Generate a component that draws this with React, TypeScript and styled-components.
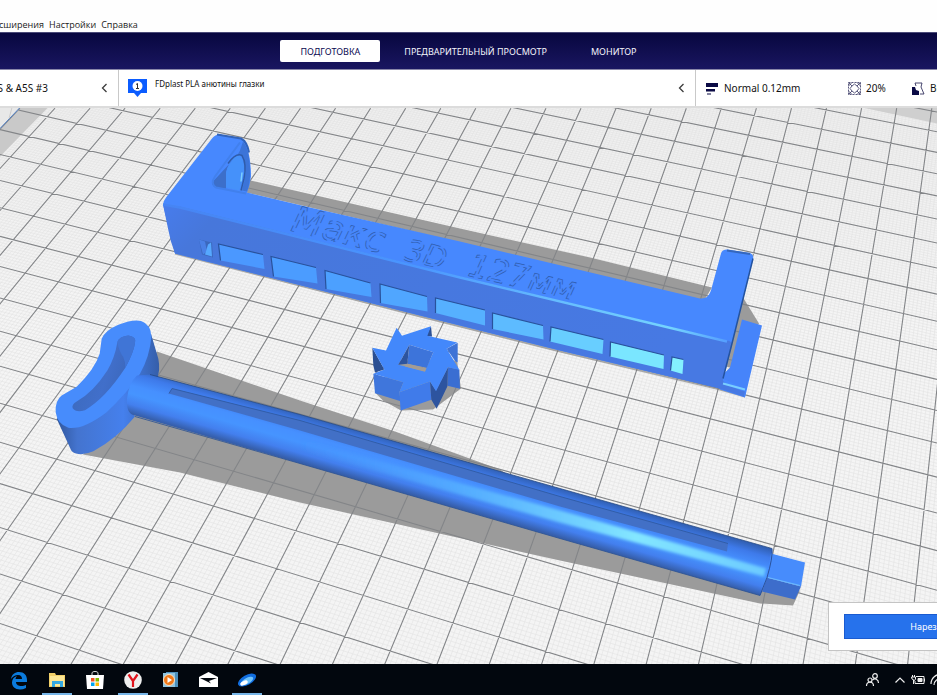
import React from "react";
import styled, { createGlobalStyle } from "styled-components";

const GlobalStyle = createGlobalStyle`
  html, body { margin: 0; height: 100%; overflow: hidden; }
  #root { height: 100%; }
  * { box-sizing: border-box; }
  button { font: inherit; border: 0; margin: 0; padding: 0; background: none; cursor: pointer; }
`;

const Desktop = styled.div`
  display: flex;
  flex-direction: column;
  height: 100vh;
  overflow: hidden;
  background: #fff;
  font-family: "Noto Sans", "Open Sans", sans-serif;
  font-size: 10px;
  color: #14142b;
`;

const MenuBar = styled.nav`
  display: flex;
  align-items: flex-end;
  gap: 5px;
  height: 32px;
  flex: none;
  background: #fefefe;
`;

const MenuItem = styled.button<{ $clipped?: boolean }>`
  display: flex;
  justify-content: flex-end;
  width: ${(p) => (p.$clipped ? "44px" : "auto")};
  overflow: hidden;
  white-space: nowrap;
  font-family: "Open Sans", sans-serif;
  font-size: 9px;
  line-height: 14px;
  color: #222;
`;

const StageBar = styled.header`
  display: flex;
  justify-content: center;
  align-items: center;
  gap: 4px;
  height: 37px;
  flex: none;
  border-top: 1px solid #4a4a78;
  background: linear-gradient(#08073f, #191660);
`;

const StageTab = styled.button<{ $active?: boolean }>`
  height: 22px;
  padding: 0 20px;
  border-radius: 2px;
  background: ${(p) => (p.$active ? "#fff" : "transparent")};
  color: ${(p) => (p.$active ? "#0a0850" : "#f4f4fb")};
  font-size: 9px;
  white-space: nowrap;
`;

const ConfigBar = styled.section`
  display: grid;
  grid-template-columns: 119px 1fr 241px;
  height: 39px;
  flex: none;
  overflow: hidden;
  border-top: 1px solid #8987a8;
  border-bottom: 2px solid #dcdcdc;
  background: #fff;
`;

const ConfigCell = styled.button<{ $divided?: boolean }>`
  display: flex;
  align-items: center;
  overflow: hidden;
  white-space: nowrap;
  text-align: left;
  color: #111;
  border-right: ${(p) => (p.$divided ? "1px solid #c9c9c9" : "0")};
`;

const PrinterName = styled.span`
  display: flex;
  justify-content: flex-end;
  width: 48px;
  overflow: hidden;
`;

const CellArrow = styled.svg`
  width: 8px;
  height: 12px;
  margin-left: auto;
  margin-right: 10px;
`;

const MaterialName = styled.span`
  align-self: flex-start;
  margin: 8px 0 0 8px;
  font-size: 8px;
  line-height: 12px;
`;

const ExtruderIcon = styled.svg`
  width: 20px;
  height: 20px;
  margin-left: 8px;
  flex: none;
`;

const Setting = styled.span<{ $width: number }>`
  display: flex;
  align-items: center;
  gap: 5px;
  flex: none;
  width: ${(p) => p.$width}px;
`;

const SettingsCell = styled(ConfigCell)`
  padding-left: 10px;
`;

const Viewport = styled.main`
  position: relative;
  flex: 1;
  min-height: 0;
  overflow: hidden;
  background: #f1f1f1;
`;

const Scene = styled.svg`
  display: block;
  width: 100%;
  height: 100%;
`;

const ActionPanel = styled.div`
  position: absolute;
  right: -96px;
  bottom: 13px;
  padding: 11px 15px;
  border: 1px solid #c4c4c4;
  background: #fff;
`;

const SliceButton = styled.button`
  display: block;
  width: 173px;
  height: 25px;
  border: 1px solid #1a5bd0;
  background: #2672ec;
  color: #fff;
  font-size: 9px;
`;

const Taskbar = styled.footer`
  display: flex;
  justify-content: space-between;
  height: 31px;
  flex: none;
  background: #02070e;
`;

const TaskGroup = styled.div`
  display: flex;
`;

const TaskButton = styled.button<{ $running?: boolean }>`
  display: grid;
  place-items: center;
  width: 38px;
  height: 31px;
  padding: 0 4px;
  svg { display: block; width: 20px; height: 20px; }
  background: ${(p) =>
    p.$running ? "linear-gradient(#76b5e8, #76b5e8) center bottom / 30px 2px no-repeat" : "none"};
`;

const Tray = styled.div`
  display: flex;
  align-items: center;
  gap: 3px;
  width: 72px;
  overflow: hidden;
`;

const TrayButton = styled.button<{ $wide?: boolean }>`
  flex: none;
  width: ${(p) => (p.$wide ? "24px" : "16px")};
  height: 16px;
  svg { display: block; width: 16px; height: 16px; }
`;

const VIEW = { left: 0, top: 107, width: 937, height: 557 };

function lengthwiseY(k: number) {
  return 49630 / (45.155 - k) - 970;
}

function gridPath(step: number, skipMajor: boolean) {
  const parts: string[] = [];
  for (let i = -190; i <= 150; i += step) {
    if (skipMajor && i % 10 === 0) continue;
    const y = lengthwiseY(i / 10);
    const end = y + ((y + 1012) / 4858) * 937;
    if (end > 100) parts.push(`M0 ${y.toFixed(1)}L937 ${end.toFixed(1)}`);
  }
  for (let i = -10; i <= 390; i += step) {
    if (skipMajor && i % 10 === 0) continue;
    const n = i / 10;
    parts.push(`M${(55 + 35.07 * n).toFixed(1)} 107.7L${(52.3 * n - 452.2).toFixed(1)} 664`);
  }
  return parts.join("");
}

const MINOR_GRID = gridPath(1, true);
const MAJOR_GRID = gridPath(10, false);

const WINDOWS: [string, string][] = [
  ["218.5,243.5 263,254 264.5,268.5 220.5,260", "#4b98ff"],
  ["271,256 316,267 317.5,283 273.5,276", "#4b9cff"],
  ["325,270 370.5,282.5 371.5,296.5 326,288.5", "#4ca0ff"],
  ["380,283.5 427,296 427.5,311 380.5,302.5", "#50a6ff"],
  ["435.5,297.5 485,309.5 485,325 435.5,312.5", "#56b0ff"],
  ["492.5,312.5 543,325 543.5,339 492.5,328.5", "#5dbbff"],
  ["551,326.5 603.5,339 602.5,353.5 550,341", "#68ceff"],
  ["610.5,341.5 664,354.5 663.5,368.5 610,356", "#7ae6ff"],
  ["672,356.5 683.5,359 682.5,373.5 670.5,370", "#84f0ff"],
];

function Shadows() {
  return (
    <g fill="#9b9b9b">
      <path d="M246 179L460 228L590 257L712 287L704 300L460 242L246 192z" />
      <path d="M743 297L759 323L733 368L726 366z" />
      <path d="M157 351L300 400L395 431L500 469L560 510L760 590L800 590L793 605L760 603L560 560L300 502L180 472L83 454z" />
      <path d="M375 392L383 400L401 410L433 409L461 388L457 360L397 360z" />
    </g>
  );
}

function Bracket() {
  return (
    <g>
      <path d="M175 254L420 317L560 352L716 389L745 397L745 393L175 249z" fill="#777" opacity=".6" />
      <path d="M742 319L762 325L745 397L720 389L723 374L730 367z" fill="#4684fa" />
      <path d="M163 204Q163 201 166 197L212 138Q215 134 220 134L240 138Q246 140 248 150Q251 162 251 176Q250 185 247 192L310 207L460 241L700 298Q708 299 711 290L721 253Q722 249 727 249L750 252.500Q754 254 753 259L732 343L723 378L746 389L745 396L716 387L560 350L420 315L175 253Z" fill="#4788fe" />
      <path d="M163 204L180 206L460 276L727 340Q733 341 732 345L723 379Q722 384 745 391L744 396L716 387L560 350L420 315L175 253Q170 240 168 228Z" fill="url(#front)" />
      <path d="M163 204L180 207L460 277L727 341" fill="none" stroke="url(#ridge)" strokeWidth="2.500" />
      <path d="M723 383L745 389" fill="none" stroke="#79ceff" strokeWidth="2" />
      <path d="M753 258L732 343L723 378" fill="none" stroke="#24539f" strokeWidth="1.500" />
      <path d="M217 134L241 138Q247 141 249 152" fill="none" stroke="#3264bb" strokeWidth="2" />
      <path d="M243 141Q249 148 250 166Q251 181 247 191L242 190Q248 170 244 157Q241 151 236 157L240 150z" fill="#3c74d8" />
      <path d="M213 181Q211 184 215 187Q220 188 226 188L226 172Q228 162 236 156L238 154z" fill="#3c6fca" />
      <path d="M237 154Q243 155 244 166Q244 178 239 190L226 187L226 172Q229 162 237 154z" fill="#4591fa" />
      <path d="M228 163Q236 152 242 155Q247 163 244 178L241 190" fill="none" stroke="#2f5ca9" strokeWidth="1.500" />
      <path d="M242 172L241 181" stroke="#7ccfff" strokeWidth="1.500" />
      <path d="M240 142L215 176Q210 183 216 187L246 193" fill="none" stroke="#4180ed" strokeWidth="2" />
      <path d="M727 250L750 253.500" stroke="#3567bd" strokeWidth="2" />
      <path d="M199 239L212 242L213 257L202 254z" fill="#3b68bd" />
      <path d="M199 239L205 241L207 251L203 254z" fill="#4a80e6" />
      <path d="M208 244L211 242L212 256L205 254z" fill="#56a8ff" />
      {WINDOWS.map(([points, fill]) => {
        const corners = points.split(" ");
        return (
          <g key={points}>
            <polygon points={points} fill={fill} />
            <polyline
              points={`${corners[3]} ${corners[0]} ${corners[1]}`}
              fill="none"
              stroke="#29529c"
              strokeWidth="1.200"
            />
          </g>
        );
      })}
      <g
        fill="#4786fa"
        stroke="#2f5dae"
        strokeWidth=".7"
        strokeDasharray="9 4"
        fontFamily="DejaVu Sans"
        fontStyle="italic"
      >
        <text fontSize="36" transform="translate(290 230) rotate(14)">Макс</text>
        <text fontSize="30" transform="translate(403 259) rotate(14)">3D</text>
        <text fontSize="32" transform="translate(467 275) rotate(13)">127мм</text>
      </g>
    </g>
  );
}

function Gear() {
  return (
    <g transform="translate(350 310) scale(.33333)">
      <path d="M70 190L160 215L148 245L152 272L75 248z" fill="#3f76dc" />
      <path d="M67 112L103 177L75 186L70 165z" fill="#2b4f92" />
      <path d="M290 115L323 97L323 156L316 152z" fill="#3e73d6" />
      <path d="M294 170L328 177L330 235L292 226z" fill="#3a6ed2" />
      <path d="M148 245L240 213L244 268L152 300z" fill="#407bea" />
      <path d="M240 213L258 240L294 170L292 228L260 295L244 268z" fill="#2d549f" />
      <path d="M243 47L246 78L226 78z" fill="#2c5196" />
      <path
        fillRule="evenodd"
        d="M67 112L108 120L140 52L156 76L243 47L232 76L322 96L290 115L328 178L294 170L258 242L240 213L148 245L160 215L70 190L103 177zM178 103L250 125L225 182L145 163z"
        fill="#4388fb"
      />
      <path d="M178 103L250 125L230 172L172 160z" fill="#3d74da" />
      <path d="M178 103L172 160L145 163z" fill="#2d549e" />
      <path d="M172 160L229 173L225 184L165 168z" fill="#a49c94" />
    </g>
  );
}

function Roller() {
  return (
    <g>
      <g transform="translate(40 310) scale(.33333)">
        <path d="M333 70L355 145Q362 180 350 207L262 285L285 318Q230 385 160 422Q130 435 108 429Q94 426 90 412L50 325L150 260z" fill="url(#handleSide)" />
        <path
          fillRule="evenodd"
          d="M185 85Q195 60 235 43Q280 25 305 32Q334 42 334 80Q330 135 300 190Q260 250 200 305Q130 358 85 352Q52 340 47 305Q45 270 65 255L110 229Q165 175 179 130z"
          fill="#478cfc"
        />
        <path d="M232 95Q238 77 265 75Q291 79 285 98Q281 125 256 172Q195 265 135 299Q108 307 98 293Q94 282 110 273Q160 245 202 180Q225 140 232 95z" fill="url(#handleSlot)" />
        <path d="M232 95Q236 120 250 140Q257 155 256 172Q281 125 285 98Q291 79 265 75Q238 77 232 95z" fill="#4075d6" />
      </g>
      <path d="M137 375L150 374L300 414L560 488L772 548Q773 552 770 568L764 586L760 595L560 538L300 463L135 415Q126 414 127 398Q129 382 137 375z" fill="url(#rod)" />
      <path d="M200 411L560 510L766 568L764 576L560 522L200 421z" fill="url(#shine)" filter="url(#soften)" />
      <path d="M169 393L172 388L300 420L560 496L728 543L727 551L560 506L300 430z" fill="#4270c6" />
      <path d="M169 393L172 388L300 420L560 496L728 543" fill="none" stroke="#315da8" />
      <path d="M150 374L300 414L560 488L772 548" fill="none" stroke="#234782" opacity=".75" />
      <path d="M135 416L300 463L560 538L760 595" fill="none" stroke="#2b5192" opacity=".8" />
      <path d="M771 553L805 562L801 586L767 577z" fill="#478cfc" />
      <path d="M767 577L801 586L795 599L762 591z" fill="#3d6dcb" />
      <path d="M768 577L800 585" stroke="#69b9ff" strokeWidth="1.200" />
      <path d="M772 548Q773 557 767 577L760 595" fill="none" stroke="#2a529c" />
    </g>
  );
}

function BuildPlate() {
  return (
    <Scene
      viewBox={`${VIEW.left} ${VIEW.top} ${VIEW.width} ${VIEW.height}`}
      preserveAspectRatio="xMidYMid slice"
      role="img"
      aria-label="Макс 3D 127мм"
    >
      <defs>
        <linearGradient id="plate" x2="0" y2="1">
          <stop stopColor="#efefef" />
          <stop offset=".4" stopColor="#f5f5f5" />
          <stop offset="1" stopColor="#f4f4f4" />
        </linearGradient>
        <linearGradient id="front" x2="1" y2=".3">
          <stop stopColor="#477cec" />
          <stop offset=".1" stopColor="#4777db" />
          <stop offset="1" stopColor="#4779e3" />
        </linearGradient>
        <linearGradient id="ridge" x2="1">
          <stop stopColor="#4684f3" />
          <stop offset=".45" stopColor="#4a96ff" />
          <stop offset=".7" stopColor="#66bdff" />
          <stop offset=".9" stopColor="#74d4ff" />
          <stop offset="1" stopColor="#559eff" />
        </linearGradient>
        <linearGradient id="handleSide" x2="1">
          <stop stopColor="#30569c" />
          <stop offset=".2" stopColor="#4474cf" />
          <stop offset=".65" stopColor="#4580ed" />
          <stop offset="1" stopColor="#355ea9" />
        </linearGradient>
        <linearGradient id="handleSlot" x2="1" y2=".4">
          <stop stopColor="#3a68b8" />
          <stop offset=".65" stopColor="#416fca" />
          <stop offset="1" stopColor="#3b66b9" />
        </linearGradient>
        <linearGradient id="rod" gradientUnits="userSpaceOnUse" x1="460" y1="459" x2="447" y2="504">
          <stop stopColor="#3160b4" />
          <stop offset=".18" stopColor="#3e7aea" />
          <stop offset=".42" stopColor="#4690ff" />
          <stop offset=".6" stopColor="#4694ff" />
          <stop offset=".82" stopColor="#437fee" />
          <stop offset="1" stopColor="#365fac" />
        </linearGradient>
        <linearGradient id="shine" gradientUnits="userSpaceOnUse" x1="300" y1="0" x2="766" y2="0">
          <stop stopColor="#4a9aff" stopOpacity="0" />
          <stop offset=".35" stopColor="#57b2ff" stopOpacity=".8" />
          <stop offset=".72" stopColor="#83e6ff" />
          <stop offset="1" stopColor="#6ccaff" />
        </linearGradient>
        <filter id="soften" x="-5%" y="-10%" width="110%" height="120%">
          <feGaussianBlur stdDeviation="1.500" />
        </filter>
      </defs>
      <rect x="0" y="107" width="937" height="557" fill="url(#plate)" />
      <path d={MINOR_GRID} stroke="#e2e2e2" strokeWidth=".6" fill="none" />
      <path d="M20 107L48 107L0 156L0 128z" fill="#c9c9c9" />
      <path d="M862 107L937 107L937 123z" fill="#cfcfcf" />
      <Shadows />
      <path d={MAJOR_GRID} stroke="#838588" strokeWidth="1.100" fill="none" />
      <path d="M0 107L20 107L0 128z" fill="#e8e8e8" />
      <path d="M20 107L0 128" stroke="#4f7fc4" />
      <path d="M12 107L9 118" stroke="#ccc" />
      <Bracket />
      <Roller />
      <Gear />
    </Scene>
  );
}

const Arrow = () => (
  <CellArrow viewBox="0 0 8 12" fill="none" stroke="#3c3c3c" strokeWidth="1.300">
    <path d="M6.500 2L2.500 6L6.500 10" />
  </CellArrow>
);

const ProfileIcon = () => (
  <svg width="13" height="13" viewBox="0 0 13 13" fill="#0b0a45">
    <path d="M0 1h12v4H0zM0 7h9v2.500H0zM1 11.500h4v1H1z" />
  </svg>
);

const InfillIcon = () => (
  <svg width="13" height="13" viewBox="0 0 13 13" fill="none" stroke="#33325f" strokeWidth=".8">
    <path d="M.5 .5h12v12H.5z" strokeDasharray="2 1" />
    <path d="M.5 4L4 .5M9 .5L12.500 4M12.500 9L9 12.500M4 12.500L.5 9M.5 .5L4 4M12.500 .5L9 4M12.500 12.500L9 9M.5 12.500L4 9M4 4L6.500 2L9 4L11 6.500L9 9L6.500 11L4 9L2 6.500z" />
  </svg>
);

const SupportIcon = () => (
  <svg width="13" height="13" viewBox="0 0 13 13">
    <path d="M0 5h3l1 3 3 1v4H0z" fill="#0b0a45" />
    <path d="M3 1h7L9 5l3 7H8M3 1l1 3" fill="none" stroke="#33325f" strokeWidth=".9" />
  </svg>
);

const EdgeIcon = () => (
  <svg viewBox="0 0 20 20">
    <path d="M2 9C3 4 6 2 10 2c5 0 8 3 8 8v2H7c0 3 3 4 5 4 2 0 4-.5 5-1v3c-2 1-4 1.500-6 1.500-5 0-8-3-8-7C3 9 5 7 8 6c-1 1-1.500 2-1.500 3H13c0-2-1-4-4-4-3 0-5 1.500-7 4z" fill="#0b7bdd" />
  </svg>
);

const FolderIcon = () => (
  <svg viewBox="0 0 20 20">
    <path d="M2 3h6l1 2h9v12H2z" fill="#f1cf68" />
    <path d="M3 6h14v10H3z" fill="#fce796" />
    <path d="M5 17v-6h11v6h-3v-3H8v3z" fill="#35a9e1" />
  </svg>
);

const StoreIcon = () => (
  <svg viewBox="0 0 20 20">
    <path d="M7 6V3c0-2 6-2 6 0v3" fill="none" stroke="#ddd" />
    <path d="M1 5h18l-1 14H2z" fill="#fff" />
    <path d="M6 8h3.500v3.500H6z" fill="#f25022" />
    <path d="M10.500 8H14v3.500h-3.500z" fill="#7fba00" />
    <path d="M6 12.500h3.500V16H6z" fill="#00a4ef" />
    <path d="M10.500 12.500H14V16h-3.500z" fill="#ffb900" />
  </svg>
);

const YandexIcon = () => (
  <svg viewBox="0 0 20 20">
    <circle cx="10" cy="10" r="8.800" fill="#eee" />
    <path d="M5.500 4.500L10 11L14.500 4.500M10 11v6" fill="none" stroke="#e0131c" strokeWidth="2.200" />
  </svg>
);

const PlayerIcon = () => (
  <svg viewBox="0 0 20 20">
    <path d="M5 2h12v15H5z" fill="#4c8fbb" />
    <path d="M2 3h12v14H2z" fill="#8fc4e0" />
    <circle cx="8" cy="10" r="5.500" fill="#f07818" stroke="#fbe0c0" />
    <path d="M6.500 7L11 10L6.500 13z" fill="#fff" />
  </svg>
);

const MailIcon = () => (
  <svg viewBox="0 0 20 20">
    <path d="M0 7L9.500 2L19 7V17H0z" fill="#fff" />
    <path d="M1 8H18L10 11L12 13.500L9 12z" fill="#02070e" />
  </svg>
);

const CometIcon = () => (
  <svg viewBox="0 0 20 20">
    <ellipse cx="10" cy="10" rx="10" ry="5" transform="rotate(-30 10 10)" fill="#116dde" />
    <ellipse cx="10" cy="11" rx="7" ry="3" transform="rotate(-30 10 11)" fill="#70c3fa" />
    <ellipse cx="7" cy="13" rx="4" ry="2" transform="rotate(-25 7 13)" fill="#fff" />
  </svg>
);

const TASKS = [
  { label: "Edge", Icon: EdgeIcon, running: false },
  { label: "Проводник", Icon: FolderIcon, running: true },
  { label: "Магазин", Icon: StoreIcon, running: false },
  { label: "Браузер", Icon: YandexIcon, running: true },
  { label: "Проигрыватель", Icon: PlayerIcon, running: false },
  { label: "Почта", Icon: MailIcon, running: false },
  { label: "Cura", Icon: CometIcon, running: true },
];

export default function App() {
  return (
    <Desktop>
      <GlobalStyle />
      <MenuBar>
        <MenuItem $clipped>Расширения</MenuItem>
        <MenuItem>Настройки</MenuItem>
        <MenuItem>Справка</MenuItem>
      </MenuBar>
      <StageBar>
        <StageTab $active>ПОДГОТОВКА</StageTab>
        <StageTab>ПРЕДВАРИТЕЛЬНЫЙ ПРОСМОТР</StageTab>
        <StageTab>МОНИТОР</StageTab>
      </StageBar>
      <ConfigBar>
        <ConfigCell $divided>
          <PrinterName>A5S &amp; A5S #3</PrinterName>
          <Arrow />
        </ConfigCell>
        <ConfigCell $divided>
          <ExtruderIcon viewBox="0 0 20 20">
            <path d="M1 1h19v14h-6l-3.500 4L7 15H1z" fill="#0b5cff" />
            <circle cx="10.500" cy="8" r="5" fill="#fff" />
            <path d="M9 6.500L10.500 5.500V10.500M9 10.500h3" fill="none" stroke="#333" />
          </ExtruderIcon>
          <MaterialName>FDplast PLA анютины глазки</MaterialName>
          <Arrow />
        </ConfigCell>
        <SettingsCell>
          <Setting $width={142}>
            <ProfileIcon />
            Normal 0.12mm
          </Setting>
          <Setting $width={64}>
            <InfillIcon />
            20%
          </Setting>
          <Setting $width={64}>
            <SupportIcon />
            Вкл.
          </Setting>
        </SettingsCell>
      </ConfigBar>
      <Viewport>
        <BuildPlate />
        <ActionPanel>
          <SliceButton>Нарезать</SliceButton>
        </ActionPanel>
      </Viewport>
      <Taskbar>
        <TaskGroup>
          {TASKS.map(({ label, Icon, running }) => (
            <TaskButton key={label} aria-label={label} $running={running}>
              <Icon />
            </TaskButton>
          ))}
        </TaskGroup>
        <Tray>
          <TrayButton $wide aria-label="Люди">
            <svg viewBox="0 0 16 16" fill="none" stroke="#eee" strokeWidth="1.200">
              <circle cx="5" cy="8" r="2" />
              <circle cx="10" cy="4" r="2.300" />
              <path d="M1.500 14c0-5 7-5 7 0M7.500 8c2-2 6-1 6 3" />
            </svg>
          </TrayButton>
          <TrayButton aria-label="Скрытые значки">
            <svg viewBox="0 0 16 16" fill="none" stroke="#eee" strokeWidth="1.200">
              <path d="M3.500 10.500L8 6L12.500 10.500" />
            </svg>
          </TrayButton>
          <TrayButton aria-label="Батарея">
            <svg viewBox="0 0 16 16" fill="none" stroke="#eee">
              <path d="M5 4.500h8v7H4V9M13.500 6.500v3M1.500 3v2M3.500 3v2M.5 5h4v2l-1 1.500L1 7zM2.500 8v4" />
              <path d="M7 6.500h4v3H7z" fill="#eee" />
            </svg>
          </TrayButton>
          <TrayButton aria-label="Сеть">
            <svg viewBox="0 0 16 16" fill="none" stroke="#eee" strokeWidth="1.200">
              <path d="M1 12C1 6 6 2 12 2M4 13c0-4 4-7 8-7" />
            </svg>
          </TrayButton>
        </Tray>
      </Taskbar>
    </Desktop>
  );
}
